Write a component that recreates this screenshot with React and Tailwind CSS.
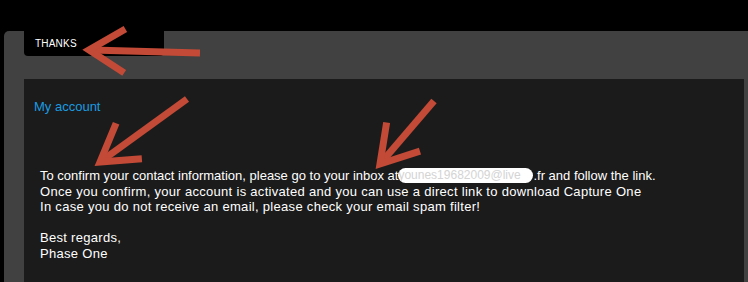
import React from 'react';

const Arrow = ({ x1, y1, x2, y2 }) => {
  const ang = Math.atan2(y2 - y1, x2 - x1);
  const len = 42;
  const spread = 0.55;
  const a1 = [x2 - len * Math.cos(ang - spread), y2 - len * Math.sin(ang - spread)];
  const a2 = [x2 - len * Math.cos(ang + spread), y2 - len * Math.sin(ang + spread)];
  return (
    <g stroke="#c24a36" strokeWidth="7" fill="none" strokeLinecap="butt" strokeLinejoin="miter">
      <line x1={x1} y1={y1} x2={x2 - 3 * Math.cos(ang)} y2={y2 - 3 * Math.sin(ang)} />
      <polyline points={`${a1[0]},${a1[1]} ${x2},${y2} ${a2[0]},${a2[1]}`} />
    </g>
  );
};

export default function App() {
  return (
    <div
      className="relative w-[748px] h-[282px] bg-black overflow-hidden text-white"
      style={{ fontFamily: '"Liberation Sans", Arial, sans-serif' }}
    >
      <div className="h-[31px]" />
      <div className="ml-[4px] h-[251px] bg-[#414141] rounded-tl-[5px] pl-[20px] pr-[4px] flex flex-col">
        <div className="w-[140px] h-[25px] bg-black rounded-b-[4px] pl-[11px] pt-[7px] text-[10px] leading-[12px] tracking-[0.2px]">
          THANKS
        </div>
        <div className="mt-[23px] flex-1 bg-[#1b1b1b] pl-[10px] pt-[20px] text-[13px] leading-[15.5px] tracking-[0.3px]">
          <div className="text-[#1a9be0] text-[13px] leading-[16px] tracking-normal">My account</div>
          <div className="mt-[53px] pl-[6px]">
            <p className="tracking-normal whitespace-nowrap">
              To confirm your contact information, please go to your inbox at
              <span className="inline-block w-[135px] bg-white text-[#d4d4d4] rounded-full text-[12px] leading-[15px] overflow-hidden align-top">younes19682009@live</span>.fr and follow the link.
            </p>
            <p>Once you confirm, your account is activated and you can use a direct link to download Capture One</p>
            <p>In case you do not receive an email, please check your email spam filter!</p>
            <p className="mt-[15.5px]">Best regards,</p>
            <p>Phase One</p>
          </div>
        </div>
      </div>
      <svg className="absolute left-0 top-0" width="748" height="282" viewBox="0 0 748 282">
        <Arrow x1={200} y1={53} x2={89} y2={50} />
        <Arrow x1={187} y1={99} x2={100} y2={162} />
        <Arrow x1={434} y1={101} x2={380} y2={164} />
      </svg>
    </div>
  );
}
